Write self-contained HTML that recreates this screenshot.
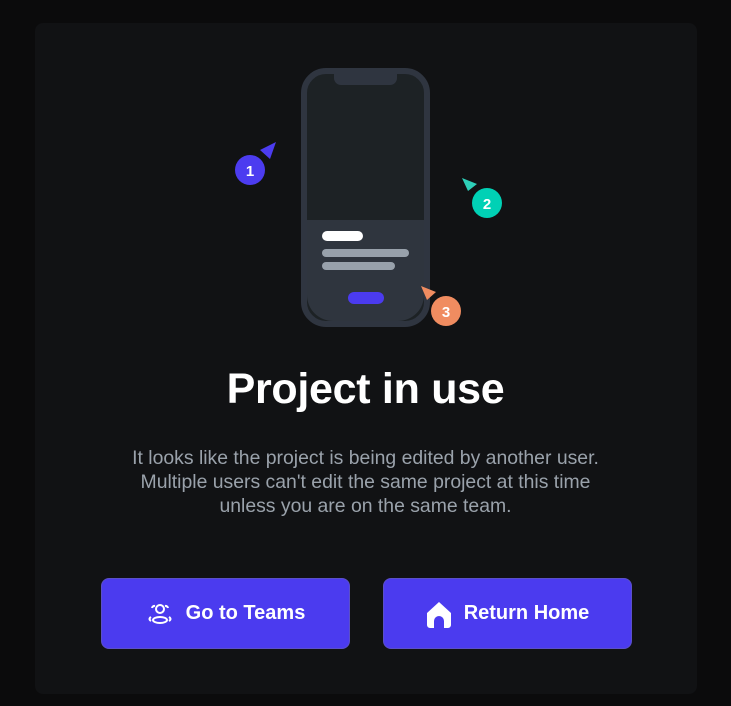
<!DOCTYPE html><html><head><style>
body{margin:0;width:731px;height:706px;background:#0b0b0c;font-family:"Liberation Sans",sans-serif;overflow:hidden;position:relative}
.card{position:absolute;left:35px;top:23px;width:662px;height:671px;background:#111214;border-radius:8px}
h1{position:absolute;left:0;width:731px;top:365px;margin:0;text-align:center;color:#fff;font-size:43px;font-weight:bold;letter-spacing:-0.3px}
p{position:absolute;left:0;width:731px;top:446px;margin:0;text-align:center;color:#9aa2ab;font-size:19.4px;line-height:24px}
.btn{position:absolute;top:578px;width:249px;height:71px;background:#4b3bef;border:1px solid #5b50c8;border-radius:8px;color:#fff;font-weight:bold;font-size:20px;display:flex;align-items:center;justify-content:center;gap:12px;box-sizing:border-box}
</style></head><body>
<div class="card"></div>
<svg style="position:absolute;left:0;top:0" width="731" height="360">
<rect x="304" y="71" width="123" height="253" rx="22" fill="#1d2225" stroke="#2f3540" stroke-width="6"/>
<path d="M307 220h117v75a26 26 0 0 1 -26 26h-65a26 26 0 0 1 -26 -26z" fill="#2f353e"/>
<path d="M334 70h63v8a7 7 0 0 1 -7 7h-49a7 7 0 0 1 -7 -7z" fill="#2f3540"/>
<rect x="427" y="130" width="3" height="27" fill="#2f3540"/>
<rect x="322" y="231" width="41" height="10" rx="5" fill="#fff"/>
<rect x="322" y="249" width="87" height="8" rx="4" fill="#98a1ab"/>
<rect x="322" y="262" width="73" height="8" rx="4" fill="#98a1ab"/>
<rect x="348" y="292" width="36" height="12" rx="6" fill="#4b3bef"/>
<circle cx="250" cy="170" r="15" fill="#4c3cf0"/>
<path d="M260 150l16-8-6 17z" fill="#4c3cf0"/>
<text x="250" y="176" fill="#fff" font-size="15" font-weight="bold" text-anchor="middle" font-family="Liberation Sans">1</text>
<circle cx="487" cy="203" r="15" fill="#00d1b5"/>
<path d="M462 178l15 6-9 7z" fill="#2ecfb8"/>
<text x="487" y="209" fill="#fff" font-size="15" font-weight="bold" text-anchor="middle" font-family="Liberation Sans">2</text>
<circle cx="446" cy="311" r="15" fill="#f08c60"/>
<path d="M421 286l15 6-9 8z" fill="#f08c60"/>
<text x="446" y="317" fill="#fff" font-size="15" font-weight="bold" text-anchor="middle" font-family="Liberation Sans">3</text>
</svg>
<h1>Project in use</h1>
<p>It looks like the project is being edited by another user.<br>Multiple users can't edit the same project at this time<br>unless you are on the same team.</p>
<div class="btn" style="left:101px"><svg width="28" height="24" viewBox="0 0 28 24" fill="none" stroke="#fff" stroke-width="2"><circle cx="14" cy="7" r="4"/><path d="M6 6a2.5 2.5 0 0 1 3-2M22 6a2.5 2.5 0 0 0-3-2"/><ellipse cx="14" cy="18" rx="7" ry="3"/><path d="M5 15q-3 2 0 4M23 15q3 2 0 4"/></svg>Go to Teams</div>
<div class="btn" style="left:383px"><svg width="26" height="28" viewBox="0 0 26 28"><path d="M1 13L13 2l12 11v12a3 3 0 0 1-3 3h-4v-7a5 5 0 0 0-10 0v7H4a3 3 0 0 1-3-3z" fill="#fff"/></svg>Return Home</div>
</body></html>
